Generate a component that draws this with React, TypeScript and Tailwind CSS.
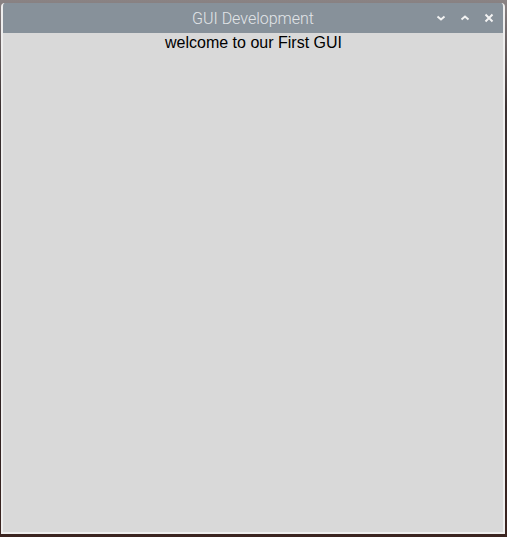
export default function App() {
  return (
    <div className="w-[507px] h-[537px] overflow-hidden bg-[linear-gradient(180deg,#8a8384_0%,#3a3030_20%,#2a2224_60%,#3b2420_100%)] pt-[3px] pl-[1px]">
      <div className="w-[504px] h-[531px] flex flex-col rounded-t-[4px] overflow-hidden bg-[#d9d9d9] border-l-2 border-r-2 border-b-2 border-[#eeeeee]">
        <div className="h-[30px] shrink-0 bg-[#87919a] relative flex items-center justify-center -mx-[2px]">
          <span className="text-[16px] pt-[2px] text-[#e2e5e8] font-['Roboto',sans-serif] font-light">GUI Development</span>
          <div className="absolute right-[11px] top-0 h-full flex items-center gap-[14px]">
            <svg width="10" height="8" viewBox="0 0 10 8">
              <path d="M1.5 2.5 L5 5.5 L8.5 2.5" stroke="#f2f2f2" strokeWidth="2" fill="none" />
            </svg>
            <svg width="10" height="8" viewBox="0 0 10 8">
              <path d="M1.5 5.5 L5 2.5 L8.5 5.5" stroke="#f2f2f2" strokeWidth="2" fill="none" />
            </svg>
            <svg width="10" height="10" viewBox="0 0 10 10">
              <path d="M1.5 1.5 L8.5 8.5 M8.5 1.5 L1.5 8.5" stroke="#f2f2f2" strokeWidth="2" fill="none" />
            </svg>
          </div>
        </div>
        <div className="flex-1 flex justify-center">
          <p className="text-[16px] leading-[18px] mt-[1px] pl-[1px] text-black font-['Liberation_Sans',Arial,sans-serif]">welcome to our First GUI</p>
        </div>
      </div>
    </div>
  );
}
